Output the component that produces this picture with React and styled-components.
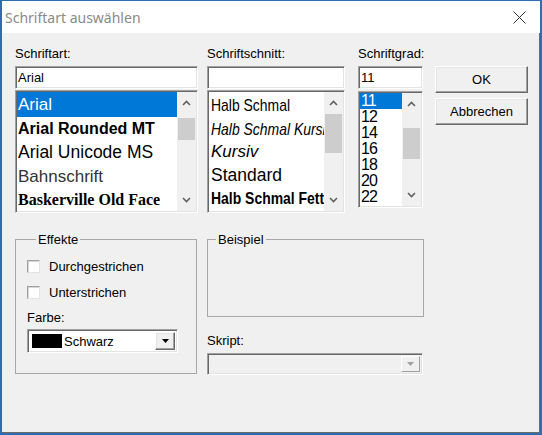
import React from "react";
import styled, { createGlobalStyle } from "styled-components";

const Global = createGlobalStyle`
  html, body, #root { margin: 0; padding: 0; height: 100%; }
  body { background: #2e6db3; font-family: "Liberation Sans", Arial, sans-serif; }
  * { box-sizing: border-box; }
`;

const sunken = `
  border-style: solid;
  border-width: 1px;
  border-color: #a0a0a0 #ffffff #ffffff #a0a0a0;
  box-shadow: inset 1px 1px 0 #696969, inset -1px -1px 0 #e3e3e3;
`;

const raised = `
  border-style: solid;
  border-width: 1px;
  border-color: #ffffff #696969 #696969 #ffffff;
  box-shadow: inset -1px -1px 0 #a0a0a0, inset 1px 1px 0 #e3e3e3;
`;

const Window = styled.div`
  width: 542px;
  height: 435px;
  display: flex;
  flex-direction: column;
  border: 2px solid #2f6db3;
  border-top-width: 1px;
  background: #f0f0f0;
`;

const TitleBar = styled.div`
  height: 32px;
  flex: none;
  background: #ffffff;
  display: flex;
  align-items: center;
  justify-content: space-between;
  padding-left: 3px;
`;

const Title = styled.div`
  font-family: "Segoe UI", "Noto Sans", sans-serif;
  font-size: 14px;
  color: #8a8a8a;
`;

const Close = styled.div`
  width: 42px;
  height: 32px;
  display: flex;
  align-items: center;
  justify-content: center;
`;

const Body = styled.div`
  flex: 1;
  display: flex;
  flex-direction: column;
  padding: 13px 0 0 13px;
  border-right: 1px solid #6a6a6a;
  border-bottom: 1px solid #6a6a6a;
  font-size: 13px;
  color: #000;
`;

const TopRow = styled.div`
  display: flex;
  align-items: flex-start;
`;

const Column = styled.div`
  display: flex;
  flex-direction: column;
  width: ${(p) => p.$w}px;
  margin-left: ${(p) => p.$ml || 0}px;
`;

const Label = styled.div`
  height: 15px;
  line-height: 15px;
  font-size: 13px;
  white-space: nowrap;
  margin-top: ${(p) => p.$mt || 0}px;
`;

const TextInput = styled.div`
  ${sunken}
  margin-top: 5px;
  height: 23px;
  background: #ffffff;
  padding: 0 2px;
  display: flex;
  align-items: center;
  font-size: 13px;
`;

const ListBox = styled.div`
  ${sunken}
  margin-top: ${(p) => p.$mt}px;
  height: ${(p) => p.$h}px;
  background: #ffffff;
  display: flex;
  padding: 1px;
`;

const Items = styled.div`
  flex: 1;
  min-width: 0;
  display: flex;
  flex-direction: column;
  overflow: hidden;
`;

const Item = styled.div`
  flex: none;
  height: ${(p) => p.$h}px;
  display: flex;
  align-items: center;
  padding-left: ${(p) => p.$pad}px;
  white-space: nowrap;
  background: ${(p) => (p.$sel ? "#0078d7" : "transparent")};
  color: ${(p) => (p.$sel ? "#ffffff" : p.$color || "#000")};
  font-family: ${(p) => (p.$serif ? '"Liberation Serif", serif' : '"Liberation Sans", Arial, sans-serif')};
  font-size: ${(p) => p.$fs}px;
  font-weight: ${(p) => (p.$bold ? 700 : 400)};
  font-style: ${(p) => (p.$italic ? "italic" : "normal")};
  letter-spacing: ${(p) => p.$ls || 0}px;
  ${(p) => p.$selW ? `width: ${p.$selW}px;` : ""}
`;

const Narrow = styled.span`
  display: inline-block;
  transform: scaleX(0.82);
  transform-origin: left center;
`;

const ScrollBar = styled.div`
  width: 19px;
  flex: none;
  display: flex;
  flex-direction: column;
  background: #f0f0f0;
`;

const ArrowBtn = styled.div`
  height: 22px;
  flex: none;
  display: flex;
  align-items: center;
  justify-content: center;
`;

const Track = styled.div`
  flex: 1;
  padding-top: ${(p) => p.$top}px;
`;

const Thumb = styled.div`
  height: ${(p) => p.$h}px;
  margin: 0 1px;
  background: #cdcdcd;
`;

const ButtonCol = styled.div`
  display: flex;
  flex-direction: column;
  gap: 5px;
  margin-left: 12px;
  padding-top: 20px;
`;

const Button = styled.div`
  ${raised}
  width: 93px;
  height: 27px;
  background: #f0f0f0;
  display: flex;
  align-items: center;
  justify-content: center;
  font-size: ${(p) => p.$fs || 13}px;
`;

const BottomRow = styled.div`
  display: flex;
  align-items: flex-start;
  margin-top: 19px;
`;

const Group = styled.fieldset`
  margin: 0;
  width: ${(p) => p.$w}px;
  border: 1px solid #a8a8a8;
  padding: ${(p) => p.$pad};
  min-width: 0;
`;

const Legend = styled.legend`
  padding: 0 2px;
  margin-left: ${(p) => p.$ml}px;
  font-size: 13px;
  line-height: 15px;
`;

const CheckRow = styled.div`
  display: flex;
  align-items: center;
  gap: 9px;
  height: 16px;
  margin-top: ${(p) => p.$mt || 0}px;
`;

const CheckBox = styled.div`
  width: 13px;
  height: 13px;
  background: #ffffff;
  border: 1px solid;
  border-color: #a0a0a0 #e3e3e3 #e3e3e3 #a0a0a0;
  box-shadow: inset 1px 1px 0 #d6d6d6;
`;

const Combo = styled.div`
  ${sunken}
  width: ${(p) => p.$w}px;
  height: ${(p) => p.$h}px;
  margin-top: ${(p) => p.$mt}px;
  background: ${(p) => (p.$disabled ? "#f0f0f0" : "#ffffff")};
  display: flex;
  align-items: center;
  padding: 2px;
  gap: 2px;
`;

const Swatch = styled.div`
  width: 30px;
  height: 14px;
  margin-left: 2px;
  background: #000;
`;

const ComboText = styled.div`
  flex: 1;
  font-size: 13px;
`;

const ComboBtn = styled.div`
  ${raised}
  width: ${(p) => p.$w}px;
  height: 100%;
  flex: none;
  margin-left: auto;
  display: flex;
  align-items: center;
  justify-content: center;
  background: #f0f0f0;
  ${(p) => p.$disabled ? "border-color: #ffffff #a0a0a0 #a0a0a0 #ffffff; box-shadow: none;" : ""}
`;

const SampleArea = styled.div`
  height: 69px;
`;

const ChevUp = () => (
  <svg width="9" height="6" viewBox="0 0 9 6">
    <polyline points="1,5 4.5,1.5 8,5" fill="none" stroke="#606060" strokeWidth="1.6" />
  </svg>
);
const ChevDown = () => (
  <svg width="9" height="6" viewBox="0 0 9 6">
    <polyline points="1,1 4.5,4.5 8,1" fill="none" stroke="#606060" strokeWidth="1.6" />
  </svg>
);
const Tri = ({ color }) => (
  <svg width="7" height="4" viewBox="0 0 7 4">
    <polygon points="0,0 7,0 3.5,4" fill={color} />
  </svg>
);

const Scroll = ({ top, h }) => (
  <ScrollBar>
    <ArrowBtn><ChevUp /></ArrowBtn>
    <Track $top={top}><Thumb $h={h} /></Track>
    <ArrowBtn><ChevDown /></ArrowBtn>
  </ScrollBar>
);

const fonts = [
  { t: "Arial", h: 25, fs: 17, sel: true },
  { t: "Arial Rounded MT", h: 23, fs: 16, bold: true },
  { t: "Arial Unicode MS", h: 25, fs: 17.5 },
  { t: "Bahnschrift", h: 24, fs: 17, color: "#333" },
  { t: "Baskerville Old Face", h: 22, fs: 16, serif: true, bold: true },
];

const styles = [
  { t: "Halb Schmal", h: 27, fs: 17, narrow: true },
  { t: "Halb Schmal Kursiv", h: 21, fs: 17, narrow: true, italic: true },
  { t: "Kursiv", h: 24, fs: 17, italic: true },
  { t: "Standard", h: 23, fs: 17.5 },
  { t: "Halb Schmal Fett", h: 24, fs: 17, narrow: true, bold: true },
];

const sizes = ["11", "12", "14", "16", "18", "20", "22"];

export default function App() {
  return (
    <>
      <Global />
      <Window>
        <TitleBar>
          <Title>Schriftart auswählen</Title>
          <Close>
            <svg width="13" height="13" viewBox="0 0 13 13">
              <line x1="0.5" y1="0.5" x2="12.5" y2="12.5" stroke="#333" strokeWidth="1" />
              <line x1="12.5" y1="0.5" x2="0.5" y2="12.5" stroke="#333" strokeWidth="1" />
            </svg>
          </Close>
        </TitleBar>
        <Body>
          <TopRow>
            <Column $w={183}>
              <Label>Schriftart:</Label>
              <TextInput>Arial</TextInput>
              <ListBox $mt={1} $h={123}>
                <Items>
                  {fonts.map((f) => (
                    <Item key={f.t} $h={f.h} $fs={f.fs} $sel={f.sel} $bold={f.bold} $serif={f.serif} $color={f.color} $pad={1}>
                      {f.t}
                    </Item>
                  ))}
                </Items>
                <Scroll top={4} h={22} />
              </ListBox>
            </Column>
            <Column $w={138} $ml={9}>
              <Label>Schriftschnitt:</Label>
              <TextInput />
              <ListBox $mt={1} $h={123}>
                <Items>
                  {styles.map((s) => (
                    <Item key={s.t} $h={s.h} $fs={s.fs} $bold={s.bold} $italic={s.italic} $pad={2}>
                      {s.narrow ? <Narrow>{s.t}</Narrow> : s.t}
                    </Item>
                  ))}
                </Items>
                <Scroll top={0} h={39} />
              </ListBox>
            </Column>
            <Column $w={65} $ml={13}>
              <Label>Schriftgrad:</Label>
              <TextInput>11</TextInput>
              <ListBox $mt={2} $h={117}>
                <Items>
                  {sizes.map((s, i) => (
                    <Item key={s} $h={16} $fs={16} $ls={-1} $sel={i === 0} $pad={1}>
                      {s}
                    </Item>
                  ))}
                </Items>
                <Scroll top={13} h={31} />
              </ListBox>
            </Column>
            <ButtonCol>
              <Button>OK</Button>
              <Button>Abbrechen</Button>
            </ButtonCol>
          </TopRow>
          <BottomRow>
            <Group $w={182} $pad="11px 0 20px 11px">
              <Legend $ml={9}>Effekte</Legend>
              <CheckRow>
                <CheckBox />
                <span>Durchgestrichen</span>
              </CheckRow>
              <CheckRow $mt={10}>
                <CheckBox />
                <span>Unterstrichen</span>
              </CheckRow>
              <Label $mt={10}>Farbe:</Label>
              <Combo $w={151} $h={24} $mt={4}>
                <Swatch />
                <ComboText>Schwarz</ComboText>
                <ComboBtn $w={20}><Tri color="#000" /></ComboBtn>
              </Combo>
            </Group>
            <Column $w={217} $ml={10}>
              <Group $w={217} $pad="0">
                <Legend $ml={8}>Beispiel</Legend>
                <SampleArea />
              </Group>
              <Label $mt={16}>Skript:</Label>
              <Combo $w={216} $h={22} $mt={5} $disabled>
                <ComboBtn $w={19} $disabled><Tri color="#a0a0a0" /></ComboBtn>
              </Combo>
            </Column>
          </BottomRow>
        </Body>
      </Window>
    </>
  );
}
